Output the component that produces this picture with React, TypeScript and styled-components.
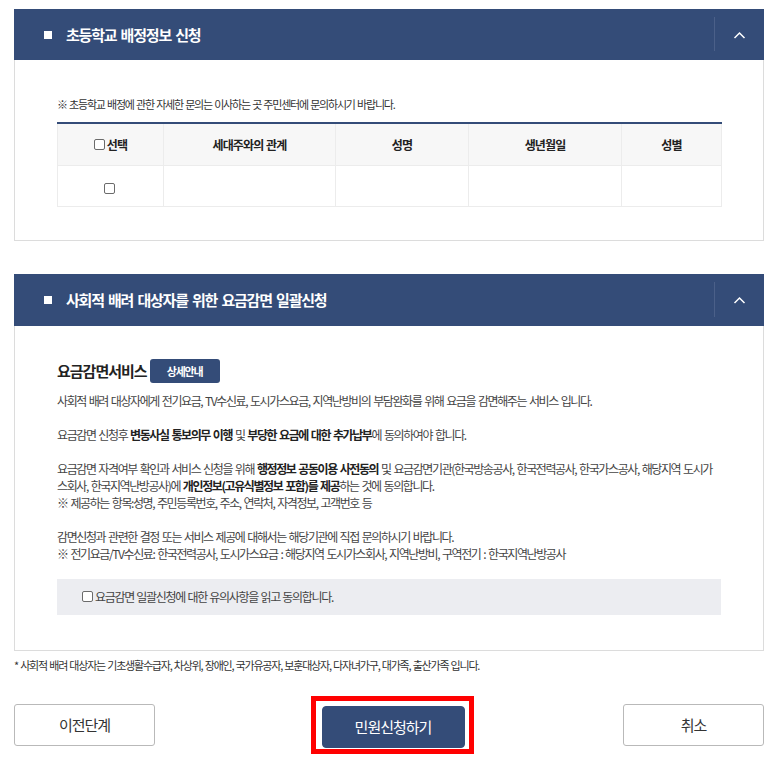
import React from "react";
import styled, { createGlobalStyle } from "styled-components";

const Global = createGlobalStyle`
  html, body { margin: 0; padding: 0; background: #fff; }
  body { font-family: "Noto Sans CJK KR", "Noto Sans", sans-serif; color: #444; }
  * { box-sizing: border-box; }
`;

const NAVY = "#344c78";

const Page = styled.div`
  width: 781px;
  padding: 9px 17px 0 14px;
`;

const Panel = styled.section<{ $gap?: number }>`
  margin-bottom: ${(p) => p.$gap ?? 0}px;
`;

const PanelHeader = styled.div<{ $h: number }>`
  height: ${(p) => p.$h}px;
  background: ${NAVY};
  display: flex;
  align-items: center;
  padding-left: 30px;
`;

const Bullet = styled.span`
  width: 8px;
  height: 8px;
  background: #fff;
  margin-right: 14px;
  flex: none;
`;

const PanelTitle = styled.h2`
  margin: 0;
  flex: 1;
  font-size: 15px;
  font-weight: 700;
  color: #fff;
  letter-spacing: -1.2px;
  word-spacing: 2px;
`;

const Toggle = styled.div`
  width: 50px;
  align-self: stretch;
  display: flex;
  align-items: center;
  justify-content: center;
  position: relative;
  &::before {
    content: "";
    position: absolute;
    left: 0;
    top: 8px;
    bottom: 9px;
    width: 1px;
    background: #4b6089;
  }
`;

const PanelBody = styled.div<{ $pad: string }>`
  border: 1px solid #dcdcdc;
  border-top: none;
  padding: ${(p) => p.$pad};
`;

const Notice = styled.p`
  margin: 0 0 11px;
  font-size: 11px;
  line-height: 14px;
  color: #333;
  letter-spacing: -1.2px;
  word-spacing: 1px;
`;

const Table = styled.table`
  width: 100%;
  border-collapse: collapse;
  border-top: 2px solid ${NAVY};
  table-layout: fixed;
`;

const Th = styled.th<{ $w: number }>`
  width: ${(p) => p.$w}px;
  height: 42px;
  background: #f7f7f7;
  font-size: 12px;
  font-weight: 700;
  color: #222;
  letter-spacing: -0.9px;
  word-spacing: 1px;
  border-left: 1px solid #ececec;
  border-right: 1px solid #ececec;
  padding: 0;
`;

const Td = styled.td`
  height: 41px;
  border: 1px solid #ececec;
  text-align: center;
  padding: 0;
`;

const Check = styled.span`
  display: inline-block;
  width: 11px;
  height: 11px;
  border: 1px solid #6b6b6b;
  border-radius: 2px;
  background: #fff;
  vertical-align: -1px;
  margin-right: 2px;
  flex: none;
`;

const Label = styled.span`
  display: inline-flex;
  align-items: center;
`;

const ServiceTitleRow = styled.div`
  display: flex;
  align-items: center;
  gap: 3px;
  height: 24px;
  margin-bottom: 9px;
`;

const ServiceTitle = styled.h3`
  margin: 0;
  font-size: 15px;
  font-weight: 700;
  color: #222;
  letter-spacing: -1px;
`;

const Badge = styled.span`
  width: 70px;
  height: 24px;
  border-radius: 3px;
  background: ${NAVY};
  color: #fff;
  font-size: 11px;
  font-weight: 700;
  letter-spacing: -1.2px;
  display: flex;
  align-items: center;
  justify-content: center;
`;

const Para = styled.p`
  margin: 0 0 17px;
  font-size: 12px;
  line-height: 17px;
  color: #444;
  letter-spacing: -1.4px;
  word-spacing: 1.5px;
  word-break: break-all;
  b { color: #222; font-weight: 700; }
`;

const AgreeBox = styled.label`
  margin-top: 10px;
  height: 36px;
  background: #ecedf1;
  display: flex;
  align-items: center;
  padding-left: 25px;
  font-size: 12px;
  color: #444;
  letter-spacing: -1.3px;
  word-spacing: 1px;
`;

const Footnote = styled.p`
  margin: 7px 0 0;
  font-size: 11px;
  line-height: 14px;
  color: #333;
  letter-spacing: -1.2px;
  word-spacing: 1px;
`;

const ButtonRow = styled.div`
  display: flex;
  justify-content: space-between;
  align-items: center;
  margin-top: 24px;
`;

const Btn = styled.button<{ $primary?: boolean }>`
  width: ${(p) => (p.$primary ? 143 : 141)}px;
  height: 42px;
  border-radius: ${(p) => (p.$primary ? 4 : 3)}px;
  border: 1px solid ${(p) => (p.$primary ? NAVY : "#b9b9b9")};
  background: ${(p) => (p.$primary ? NAVY : "#fff")};
  color: ${(p) => (p.$primary ? "#fff" : "#333")};
  font-family: inherit;
  font-size: 15px;
  letter-spacing: -1px;
  padding: 0;
`;

const Highlight = styled.div`
  border: 5px solid #ff0000;
  padding: 5px 4px 1px 6px;
  margin-left: 6px;
`;

const Chevron = () => (
  <svg width="13" height="8" viewBox="0 0 13 8">
    <polyline points="1.5,7 6.5,2 11.5,7" fill="none" stroke="#fff" strokeWidth="1.5" />
  </svg>
);

const cols = [106, 172, 133, 153, 100];

export default function App() {
  return (
    <>
      <Global />
      <Page>
        <Panel $gap={33}>
          <PanelHeader $h={51}>
            <Bullet />
            <PanelTitle>초등학교 배정정보 신청</PanelTitle>
            <Toggle>
              <Chevron />
            </Toggle>
          </PanelHeader>
          <PanelBody $pad="37px 42px 33px">
            <Notice>※ 초등학교 배정에 관한 자세한 문의는 이사하는 곳 주민센터에 문의하시기 바랍니다.</Notice>
            <Table>
              <thead>
                <tr>
                  <Th $w={cols[0]}>
                    <Label>
                      <Check />
                      선택
                    </Label>
                  </Th>
                  <Th $w={cols[1]}>세대주와의 관계</Th>
                  <Th $w={cols[2]}>성명</Th>
                  <Th $w={cols[3]}>생년월일</Th>
                  <Th $w={cols[4]}>성별</Th>
                </tr>
              </thead>
              <tbody>
                <tr>
                  <Td>
                    <Check />
                  </Td>
                  <Td />
                  <Td />
                  <Td />
                  <Td />
                </tr>
              </tbody>
            </Table>
          </PanelBody>
        </Panel>

        <Panel>
          <PanelHeader $h={52}>
            <Bullet />
            <PanelTitle>사회적 배려 대상자를 위한 요금감면 일괄신청</PanelTitle>
            <Toggle>
              <Chevron />
            </Toggle>
          </PanelHeader>
          <PanelBody $pad="33px 42px 35px">
            <ServiceTitleRow>
              <ServiceTitle>요금감면서비스</ServiceTitle>
              <Badge>상세안내</Badge>
            </ServiceTitleRow>
            <Para>
              사회적 배려 대상자에게 전기요금, TV수신료, 도시가스요금, 지역난방비의 부담완화를 위해 요금을 감면해주는 서비스 입니다.
            </Para>
            <Para>
              요금감면 신청후 <b>변동사실 통보의무 이행</b> 및 <b>부당한 요금에 대한 추가납부</b>에 동의하여야 합니다.
            </Para>
            <Para>
              요금감면 자격여부 확인과 서비스 신청을 위해 <b>행정정보 공동이용 사전동의</b> 및 요금감면기관(한국방송공사, 한국전력공사, 한국가스공사, 해당지역 도시가스회사, 한국지역난방공사)에 <b>개인정보(고유식별정보 포함)를 제공</b>하는 것에 동의합니다.
              <br />※ 제공하는 항목:성명, 주민등록번호, 주소, 연락처, 자격정보, 고객번호 등
            </Para>
            <Para>
              감면신청과 관련한 결정 또는 서비스 제공에 대해서는 해당기관에 직접 문의하시기 바랍니다.
              <br />※ 전기요금/TV수신료: 한국전력공사, 도시가스요금 : 해당지역 도시가스회사, 지역난방비, 구역전기 : 한국지역난방공사
            </Para>
            <AgreeBox>
              <Check />
              요금감면 일괄신청에 대한 유의사항을 읽고 동의합니다.
            </AgreeBox>
          </PanelBody>
        </Panel>

        <Footnote>
          * 사회적 배려 대상자는 기초생활수급자, 차상위, 장애인, 국가유공자, 보훈대상자, 다자녀가구, 대가족, 출산가족 입니다.
        </Footnote>

        <ButtonRow>
          <Btn>이전단계</Btn>
          <Highlight>
            <Btn $primary>민원신청하기</Btn>
          </Highlight>
          <Btn>취소</Btn>
        </ButtonRow>
      </Page>
    </>
  );
}
